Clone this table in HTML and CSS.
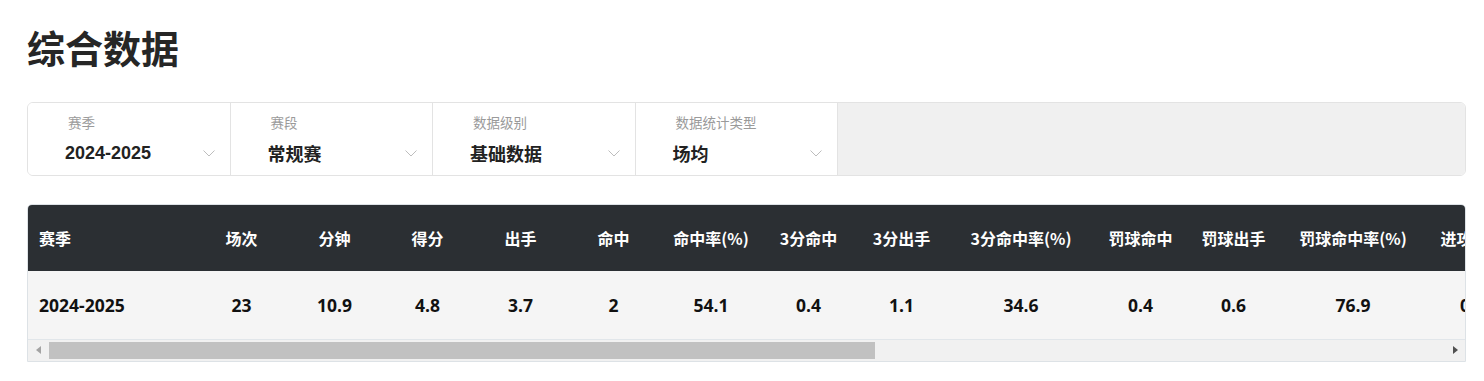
FILE: index.html
```html
<!DOCTYPE html>
<html lang="zh">
<head>
<meta charset="utf-8">
<title>综合数据</title>
<link rel="stylesheet" href="styles.css">
</head>
<body>
<div class="page">
  <h1 class="title">综合数据</h1>
  <div class="filters">
    <div class="filter">
      <div class="label">赛季</div>
      <div class="value"><span>2024-2025</span><svg class="chev" viewBox="0 0 12 7" width="12" height="7"><path d="M0.5 0.5 L6 6 L11.5 0.5" fill="none" stroke="#bdbdbd" stroke-width="1"/></svg></div>
    </div>
    <div class="filter">
      <div class="label">赛段</div>
      <div class="value"><span>常规赛</span><svg class="chev" viewBox="0 0 12 7" width="12" height="7"><path d="M0.5 0.5 L6 6 L11.5 0.5" fill="none" stroke="#bdbdbd" stroke-width="1"/></svg></div>
    </div>
    <div class="filter">
      <div class="label">数据级别</div>
      <div class="value"><span>基础数据</span><svg class="chev" viewBox="0 0 12 7" width="12" height="7"><path d="M0.5 0.5 L6 6 L11.5 0.5" fill="none" stroke="#bdbdbd" stroke-width="1"/></svg></div>
    </div>
    <div class="filter">
      <div class="label">数据统计类型</div>
      <div class="value"><span>场均</span><svg class="chev" viewBox="0 0 12 7" width="12" height="7"><path d="M0.5 0.5 L6 6 L11.5 0.5" fill="none" stroke="#bdbdbd" stroke-width="1"/></svg></div>
    </div>
    <div class="filler"></div>
  </div>

  <div class="table-wrap">
    <div class="table-scroll">
      <table class="stats">
        <thead>
          <tr>
            <th class="c-season">赛季</th>
            <th class="c-n">场次</th>
            <th class="c-n">分钟</th>
            <th class="c-n">得分</th>
            <th class="c-n">出手</th>
            <th class="c-n">命中</th>
            <th class="c-r1">命中率(%)</th>
            <th class="c-n">3分命中</th>
            <th class="c-n">3分出手</th>
            <th class="c-r2">3分命中率(%)</th>
            <th class="c-n">罚球命中</th>
            <th class="c-n">罚球出手</th>
            <th class="c-r2">罚球命中率(%)</th>
            <th class="c-n">进攻篮板</th>
            <th class="c-n">防守篮板</th>
            <th class="c-n">篮板</th>
            <th class="c-n">助攻</th>
            <th class="c-n">抢断</th>
            <th class="c-n">盖帽</th>
            <th class="c-n">失误</th>
            <th class="c-n">犯规</th>
            <th class="c-n">首发</th>
            <th class="c-n">正负值</th>
          </tr>
        </thead>
        <tbody>
          <tr>
            <td class="c-season">2024-2025</td>
            <td>23</td>
            <td>10.9</td>
            <td>4.8</td>
            <td>3.7</td>
            <td>2</td>
            <td>54.1</td>
            <td>0.4</td>
            <td>1.1</td>
            <td>34.6</td>
            <td>0.4</td>
            <td>0.6</td>
            <td>76.9</td>
            <td>0.7</td>
            <td>1.3</td>
            <td>2</td>
            <td>0.5</td>
            <td>0.3</td>
            <td>0.1</td>
            <td>0.4</td>
            <td>1</td>
            <td>2</td>
            <td>-0.8</td>
          </tr>
        </tbody>
      </table>
    </div>
    <div class="hscroll">
      <div class="sb-btn"><svg viewBox="0 0 5 8" width="5" height="8"><polygon points="5,0 0,4 5,8" fill="#a3a3a3"/></svg></div>
      <div class="sb-track"><div class="sb-thumb" style="width: 826px"></div></div>
      <div class="sb-btn"><svg viewBox="0 0 5 8" width="5" height="8"><polygon points="0,0 5,4 0,8" fill="#505050"/></svg></div>
    </div>
  </div>
</div>
</body>
</html>
```

FILE: styles.css
```css
* { box-sizing: border-box; }
html, body { margin: 0; padding: 0; background: #fff; }
body {
  font-family: "Noto Sans", "Noto Sans CJK SC", sans-serif;
  color: #222;
}
.page {
  padding: 20px 18px 0 27px;
}
.title {
  margin: 0;
  font-family: "Noto Sans CJK SC", sans-serif;
  font-size: 38px;
  line-height: 54px;
  font-weight: 700;
  color: #262626;
}
.filters {
  margin-top: 28px;
  display: flex;
  height: 74px;
  border: 1px solid #e3e3e3;
  border-radius: 6px;
  overflow: hidden;
}
.filter {
  width: 202.5px;
  flex: none;
  border-right: 1px solid #e3e3e3;
  background: #fff;
  display: flex;
  flex-direction: column;
  padding-top: 9px;
}
.filter .label {
  padding-left: 40px;
  font-family: "Noto Sans CJK SC", sans-serif;
  font-size: 13.5px;
  line-height: 20px;
  color: #9a9a9a;
}
.filter .value {
  display: flex;
  align-items: center;
  justify-content: space-between;
  padding: 0 15px 0 37px;
  margin-top: 6px;
  height: 30px;
  font-size: 18px;
  font-weight: 700;
  color: #222;
}
.filter .value span { font-family: "Liberation Sans", "Noto Sans CJK SC", sans-serif; }
.chev { flex: none; margin-top: 0; }
.filler {
  flex: 1;
  background: #f0f0f0;
}
.table-wrap {
  margin-top: 28px;
  border: 1px solid #dde2e6;
  border-radius: 5px 5px 0 0;
  overflow: hidden;
}
.table-scroll {
  overflow: hidden;
}
.stats {
  border-collapse: collapse;
  table-layout: fixed;
  width: max-content;
}
.stats th, .stats td {
  text-align: center;
  white-space: nowrap;
  padding: 0;
  font-weight: 700;
}
.stats th {
  height: 66px;
  background: #2b2f33;
  color: #fff;
  font-family: "Noto Sans CJK SC", sans-serif;
  font-size: 16px;
}
.stats td {
  height: 68px;
  background: #f5f5f5;
  color: #111;
  font-family: "Open Sans", "Noto Sans CJK SC", sans-serif;
  font-size: 17.5px;
  border-bottom: 1px solid #e1e6ea;
}
.stats .c-season { text-align: left; padding-left: 11px; width: 167px; min-width: 167px; }
.c-n { width: 93px; min-width: 93px; }
.c-r1 { width: 102px; min-width: 102px; }
.c-r2 { width: 146px; min-width: 146px; }

.hscroll {
  display: flex;
  height: 21px;
  background: #f1f1f1;
}
.sb-btn {
  width: 20px;
  flex: none;
  display: flex;
  align-items: center;
  justify-content: center;
}
.sb-track {
  flex: 1;
  padding: 2px 0 2px 1px;
}
.sb-thumb {
  height: 17px;
  background: #c1c1c1;
}
```
